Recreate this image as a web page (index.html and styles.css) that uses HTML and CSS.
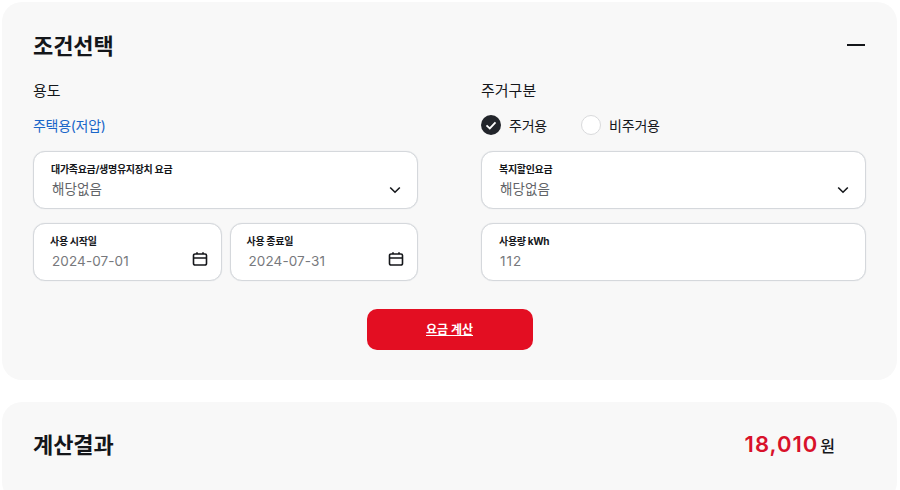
FILE: index.html
```html
<!DOCTYPE html>
<html lang="ko">
<head>
    <meta charset="UTF-8">
    <meta name="viewport" content="width=device-width, initial-scale=1.0">
    <title>요금 계산</title>
    <link rel="stylesheet" href="styles.css">
</head>
<body>
    <div class="card condition-card">
        <div class="card-header">
            <h2 class="card-title">조건선택</h2>
            <span class="collapse-icon"></span>
        </div>

        <div class="form-columns">
            <div class="form-column">
                <div class="group-label">용도</div>
                <div class="group-value usage-value">주택용(저압)</div>
                <div class="field">
                    <div class="field-label">대가족요금/생명유지장치 요금</div>
                    <div class="field-value">해당없음</div>
                    <svg class="chevron" viewBox="0 0 12 8" width="12" height="8"><path d="M1.2 1.5 6 6.2l4.8-4.7" fill="none" stroke="#14161a" stroke-width="1.6"/></svg>
                </div>
                <div class="date-row">
                    <div class="field date-field">
                        <div class="field-label">사용 시작일</div>
                        <div class="field-value">2024-07-01</div>
                        <svg class="calendar" viewBox="0 0 16 16" width="16" height="16"><path d="M3 3h10a1.5 1.5 0 0 1 1.5 1.5v8A1.5 1.5 0 0 1 13 14H3a1.5 1.5 0 0 1-1.5-1.5v-8A1.5 1.5 0 0 1 3 3ZM1.5 7h13M5 1.2V3M11 1.2V3" fill="none" stroke="#14161a" stroke-width="1.6"/></svg>
                    </div>
                    <div class="field date-field">
                        <div class="field-label">사용 종료일</div>
                        <div class="field-value">2024-07-31</div>
                        <svg class="calendar" viewBox="0 0 16 16" width="16" height="16"><path d="M3 3h10a1.5 1.5 0 0 1 1.5 1.5v8A1.5 1.5 0 0 1 13 14H3a1.5 1.5 0 0 1-1.5-1.5v-8A1.5 1.5 0 0 1 3 3ZM1.5 7h13M5 1.2V3M11 1.2V3" fill="none" stroke="#14161a" stroke-width="1.6"/></svg>
                    </div>
                </div>
            </div>

            <div class="form-column">
                <div class="group-label">주거구분</div>
                <div class="group-value radio-group">
                    <label class="radio-item">
                        <span class="radio radio-checked">
                            <svg viewBox="0 0 20 20" width="20" height="20"><path d="M5.5 10.3 8.8 13.4 14.5 7.3" fill="none" stroke="#fff" stroke-width="1.8"/></svg>
                        </span>
                        주거용
                    </label>
                    <label class="radio-item">
                        <span class="radio"></span>
                        비주거용
                    </label>
                </div>
                <div class="field">
                    <div class="field-label">복지할인요금</div>
                    <div class="field-value">해당없음</div>
                    <svg class="chevron" viewBox="0 0 12 8" width="12" height="8"><path d="M1.2 1.5 6 6.2l4.8-4.7" fill="none" stroke="#14161a" stroke-width="1.6"/></svg>
                </div>
                <div class="field">
                    <div class="field-label">사용량 kWh</div>
                    <div class="field-value number-value">112</div>
                </div>
            </div>
        </div>

        <div class="button-row">
            <a href="#" class="calc-button">요금 계산</a>
        </div>
    </div>

    <div class="card result-card">
        <h2 class="card-title">계산결과</h2>
        <div class="result-amount"><strong>18,010</strong>원</div>
    </div>
</body>
</html>
```

FILE: styles.css
```css
body {
    margin: 0;
    padding: 2px 3px 0 2px;
    height: 490px;
    box-sizing: border-box;
    overflow: hidden;
    background-color: white;
    color: #14161a;
    font-family: Inter, "Noto Sans CJK KR", sans-serif;
}

.card {
    background-color: #f8f8f8;
    border-radius: 20px;
    padding: 0 31px;
}

.condition-card {
    height: 378px;
    box-sizing: border-box;
    padding-top: 28px;
}

.card-header {
    display: flex;
    justify-content: space-between;
    align-items: center;
    height: 32px;
    margin-bottom: 17px;
}

.card-title {
    margin: 0;
    font-size: 22px;
    font-weight: 700;
    line-height: 32px;
    letter-spacing: -0.1px;
}

.collapse-icon {
    width: 18px;
    height: 2px;
    margin-right: 1px;
    margin-bottom: 2px;
    background-color: #14161a;
}

.form-columns {
    display: grid;
    grid-template-columns: 1fr 1fr;
    column-gap: 63px;
}

.form-column {
    display: flex;
    flex-direction: column;
    gap: 14px;
}

.group-label {
    font-size: 15px;
    line-height: 24px;
    height: 20px;
    margin-bottom: -1px;
}

.group-value {
    display: flex;
    align-items: center;
    height: 24px;
    margin-top: 1px;
    font-size: 14px;
}

.usage-value {
    color: #1a66c9;
    letter-spacing: -0.3px;
}

.radio-group {
    gap: 34px;
    letter-spacing: -0.2px;
}

.radio-item {
    display: flex;
    align-items: center;
    gap: 8px;
}

.radio {
    display: flex;
    width: 20px;
    height: 20px;
    box-sizing: border-box;
    border: 1px solid #d9dadc;
    border-radius: 50%;
    background-color: white;
}

.radio-checked {
    border: none;
    background-color: #22252b;
}

.field {
    position: relative;
    height: 58px;
    box-sizing: border-box;
    padding: 10px 17px;
    border: 1px solid #d5d8dc;
    border-radius: 12px;
    background-color: white;
    box-shadow: 0 0 1px #d5d8dc;
}

.date-field .field-label {
    margin-left: -1px;
}

.field-label {
    font-size: 10px;
    font-weight: 700;
    line-height: 14px;
    letter-spacing: -0.3px;
}

.field-value {
    margin-top: 3px;
    padding-left: 1px;
    font-size: 13.5px;
    letter-spacing: 0.1px;
    line-height: 20px;
    color: #626468;
}

.date-field .field-value,
.number-value {
    color: #77797d;
}

.number-value {
    letter-spacing: 1px;
}

.chevron {
    position: absolute;
    right: 16px;
    top: 34px;
}

.calendar {
    position: absolute;
    right: 13px;
    top: 27px;
}

.date-row {
    display: grid;
    grid-template-columns: 1fr 1fr;
    column-gap: 8px;
}

.button-row {
    display: flex;
    justify-content: center;
    margin-top: 28px;
}

.calc-button {
    width: 166px;
    height: 41px;
    line-height: 41px;
    border-radius: 10px;
    background-color: #e30e22;
    color: white;
    font-size: 12px;
    font-weight: 700;
    text-align: center;
}

.result-card {
    display: flex;
    justify-content: space-between;
    align-items: center;
    height: 100px;
    margin-top: 22px;
    padding-bottom: 14px;
    box-sizing: border-box;
    padding-right: 62px;
}

.result-amount {
    margin-bottom: 2px;
    font-size: 16px;
    font-weight: 500;
}

.result-amount strong {
    margin-right: 2px;
    font-size: 22px;
    font-weight: 600;
    letter-spacing: 1px;
    color: #d8112a;
}
```
